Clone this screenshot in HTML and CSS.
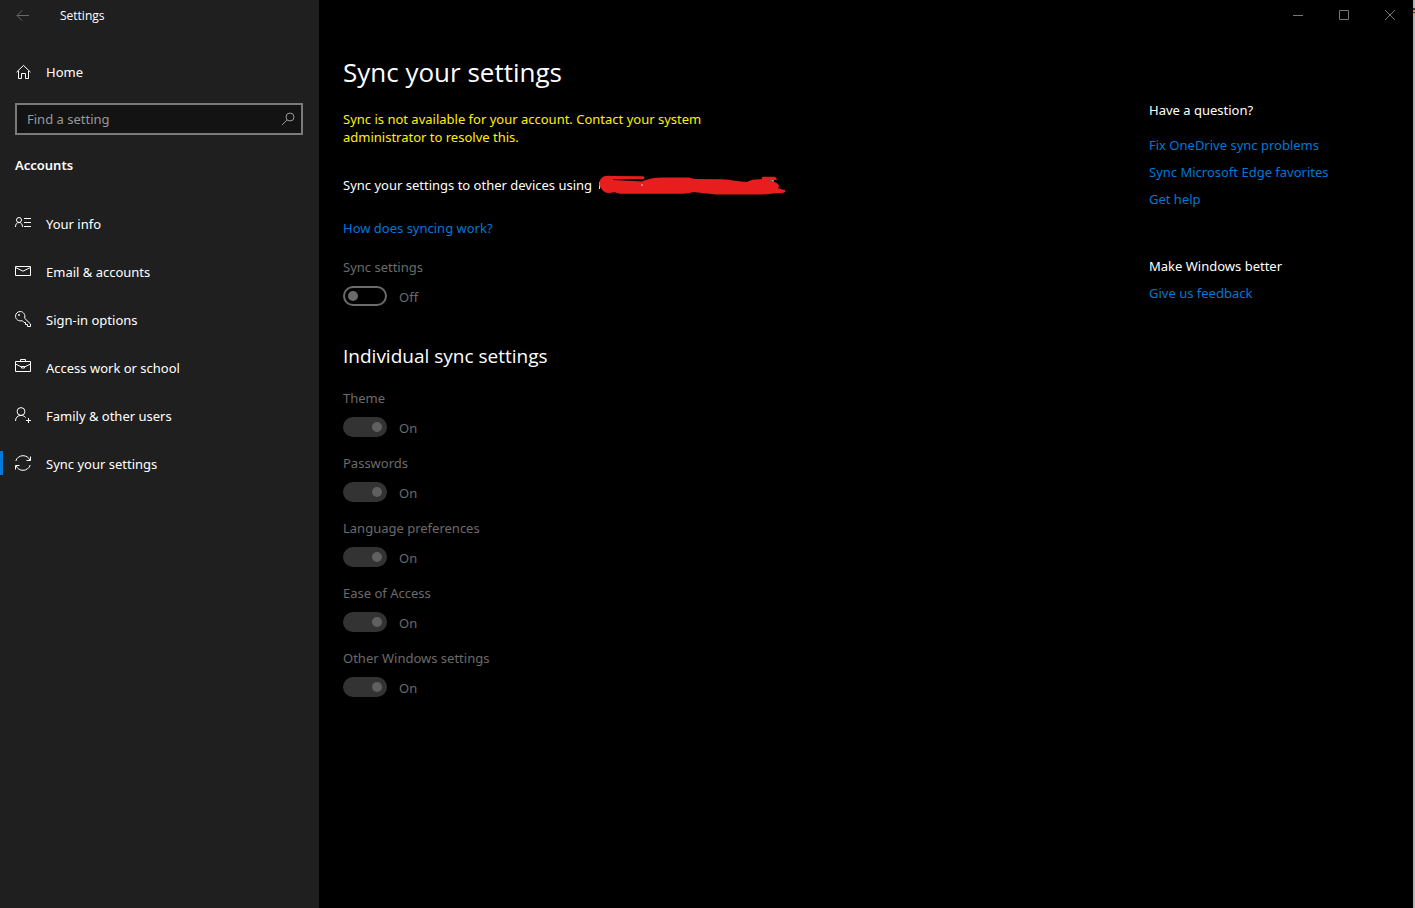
FILE: index.html
```html
<!DOCTYPE html>
<html lang="en">
<head>
<meta charset="utf-8">
<title>Settings</title>
<link rel="stylesheet" href="styles.css">
</head>
<body>
<div class="window">
  <aside class="sidebar">
    <header class="titlebar">
      <button class="back" type="button" aria-label="Back" disabled>
        <svg width="14" height="12" viewBox="0 0 14 12"><path d="M13 5.500H1M6 .5l-5 5 5 5"/></svg>
      </button>
      <span class="app-name">Settings</span>
    </header>
    <a class="nav-link home" href="#">
      <svg width="16" height="16" viewBox="0 0 16 16"><path d="M1.500 8.200L8.500 1.400l7 6.800M3.500 7v7.500h3v-5h4v5h3V7"/></svg>
      Home
    </a>
    <label class="search">
      <input type="text" placeholder="Find a setting" aria-label="Find a setting">
      <svg width="14" height="14" viewBox="0 0 14 14"><circle cx="9" cy="5" r="4"/><path d="M6.100 7.900L1 13"/></svg>
    </label>
    <h2 class="section">Accounts</h2>
    <nav class="nav">
      <a class="nav-link" href="#">
        <svg width="16" height="16" viewBox="0 0 16 16"><circle cx="4" cy="5" r="2.500"/><path d="M.5 12c0-2.800 1.300-4.500 3.500-4.500s3.500 1.700 3.500 4.500M9 3.500h7M9 7.500h7M9 11.500h7"/></svg>
        Your info
      </a>
      <a class="nav-link" href="#">
        <svg width="16" height="16" viewBox="0 0 16 16"><path d="M.5 3.500h15v9H.5zM.5 4.500L8 8.200l7.500-3.700"/></svg>
        Email &amp; accounts
      </a>
      <a class="nav-link" href="#">
        <svg width="16" height="16" viewBox="0 0 16 16"><circle cx="4" cy="4" r=".6"/><path d="M9.600 7.200L15.500 13v2.500h-3v-2h-2v-2H9L7.200 9.600C4 10.700.5 8.500.5 5.200.5 2.600 2.600.5 5.200.5c3.300 0 5.500 3.500 4.400 6.700z"/></svg>
        Sign-in options
      </a>
      <a class="nav-link" href="#">
        <svg width="16" height="16" viewBox="0 0 16 16"><path d="M.5 2.500h15v10H.5zM5.500 2.500v-2h5v2M.5 5l6 3M15.500 5l-6 3M6.500 7.500h3v1.500h-3z"/></svg>
        Access work or school
      </a>
      <a class="nav-link" href="#">
        <svg width="16" height="16" viewBox="0 0 16 16"><circle cx="6" cy="4.500" r="3.900"/><path d="M.5 14c0-3.400 2.200-5.600 5.500-5.600 2 0 3.600.8 4.600 2.200M13.500 11v5M11 13.500h5"/></svg>
        Family &amp; other users
      </a>
      <a class="nav-link active" href="#" aria-current="page">
        <svg width="16" height="16" viewBox="0 0 16 16"><path d="M.8 6C1.800 2.700 4.600.7 8 .7c3.200 0 5.700 1.700 7 4.600M15.500 1.500v4h-4M15.200 10c-1 3.300-3.800 5.300-7.200 5.300-3.200 0-5.700-1.700-7-4.600M.5 14.500v-4h4"/></svg>
        Sync your settings
      </a>
    </nav>
  </aside>

  <div class="content">
    <div class="caption">
      <button type="button" aria-label="Minimize"><svg width="10" height="10" viewBox="0 0 10 10"><path d="M0 5.500h10"/></svg></button>
      <button type="button" aria-label="Maximize"><svg width="10" height="10" viewBox="0 0 10 10"><path d="M.5.500h9v9h-9z"/></svg></button>
      <button type="button" aria-label="Close"><svg width="10" height="10" viewBox="0 0 10 10"><path d="M0 0l10 10M10 0L0 10"/></svg></button>
    </div>
    <div class="columns">
      <main class="page">
        <h1>Sync your settings</h1>
        <p class="warning">Sync is not available for your account. Contact your system administrator to resolve this.</p>
        <p class="account">Sync your settings to other devices using
          <svg class="scribble" width="188" height="20" viewBox="0 0 188 20" aria-hidden="true">
            <path class="trace" d="M1.500 7v7M171 5h4v8M177.500 13h2"/>
            <path d="M2 5C4 1 8 0 14 1l31 .3c2 .2 2 2.500 0 2.700L15 4.200l0 .8 29 1.500C52 3 58 2.500 66 2.500h24c3 0 4 1.500 8 1.500l26 .2c9 .3 17 2.600 25 2.800 6-3 9-2.500 15-3-1-3 2-2.200 5-2.300h6c4 0 3 2 4 3.300 0 0-6-.3-9 .5 5 .5 14 3.500 10 7.500l4 1.500c4-.5 5 3 0 3.500-10 .5-16 1.500-24 1.500l-42 0-23-2.500c-6 2-12 1.700-18 1.700H24c-5 0-6-1.500-8-1.700-6 2.200-11 .5-13-4C1 11 1 8 2 5z"/>
            <path class="trace" d="M43 10h2"/>
          </svg>
        </p>
        <a class="help" href="#">How does syncing work?</a>

        <section class="setting">
          <label for="sync">Sync settings</label>
          <div class="control"><input id="sync" type="checkbox" role="switch" disabled><span>Off</span></div>
        </section>

        <h2>Individual sync settings</h2>
        <section class="setting">
          <label for="theme">Theme</label>
          <div class="control"><input id="theme" type="checkbox" role="switch" checked disabled><span>On</span></div>
        </section>
        <section class="setting">
          <label for="passwords">Passwords</label>
          <div class="control"><input id="passwords" type="checkbox" role="switch" checked disabled><span>On</span></div>
        </section>
        <section class="setting">
          <label for="language">Language preferences</label>
          <div class="control"><input id="language" type="checkbox" role="switch" checked disabled><span>On</span></div>
        </section>
        <section class="setting">
          <label for="ease">Ease of Access</label>
          <div class="control"><input id="ease" type="checkbox" role="switch" checked disabled><span>On</span></div>
        </section>
        <section class="setting">
          <label for="other">Other Windows settings</label>
          <div class="control"><input id="other" type="checkbox" role="switch" checked disabled><span>On</span></div>
        </section>
      </main>
      <aside class="related">
        <h3>Have a question?</h3>
        <ul class="question">
          <li><a href="#">Fix OneDrive sync problems</a></li>
          <li><a href="#">Sync Microsoft Edge favorites</a></li>
          <li><a href="#">Get help</a></li>
        </ul>
        <h3>Make Windows better</h3>
        <ul>
          <li><a href="#">Give us feedback</a></li>
        </ul>
      </aside>
    </div>
  </div>
</div>
</body>
</html>
```
FILE: styles.css
```css
* { box-sizing: border-box; }

body {
  margin: 0;
  background: #000;
  color: #fff;
  font: 13px/18px "Segoe UI", "Noto Sans", "Open Sans", sans-serif;
}

h1, h2, h3, p, ul { margin: 0; padding: 0; font-weight: 400; }
ul { list-style: none; }
a { color: #0078d7; text-decoration: none; }
svg { flex: none; fill: none; stroke: currentColor; }

.window {
  display: flex;
  position: relative;
  min-height: 100vh;
  border-right: 2px solid #b4b4b4;
}

/* Sliver of the window behind, showing past the right edge */
.window::after {
  content: "";
  position: absolute;
  top: 8px;
  right: -2px;
  width: 2px;
  height: 7px;
  background: linear-gradient(#3c2a6a 0 2px, #e0a050 2px 4px, #4a3a50 4px 5px, #d8a868 5px);
}

.sidebar {
  flex: 0 0 319px;
  background: #1f1f1f;
}

.titlebar {
  display: flex;
  align-items: center;
  gap: 30px;
  height: 32px;
  padding-left: 16px;
}

.back {
  display: flex;
  padding: 0;
  border: 0;
  background: none;
  color: #6a6a6a;
}

.app-name { font-family: "Segoe UI", "Open Sans", sans-serif; font-size: 12px; }

.nav-link {
  display: flex;
  position: relative;
  align-items: center;
  gap: 15px;
  height: 48px;
  padding-left: 15px;
  color: #fff;
}

.nav svg { margin-bottom: 2px; }

.home { margin-top: 16px; }

.search {
  display: flex;
  align-items: center;
  height: 32px;
  margin: 7px 16px 0 15px;
  padding: 0 6px 0 10px;
  border: 2px solid #7a7a7a;
  background: #131313;
  color: #999;
}

.search input {
  flex: 1;
  min-width: 0;
  padding: 0;
  border: 0;
  outline: 0;
  background: none;
  color: #fff;
  font: inherit;
}

.search input::placeholder { color: #999; opacity: 1; }

.section {
  margin: 21px 15px 26px;
  font-size: 13px;
  line-height: 18px;
  font-weight: 600;
}

.active::before {
  content: "";
  position: absolute;
  left: 0;
  top: 11px;
  width: 3px;
  height: 24px;
  background: #0078d7;
}

.content { flex: 1; min-width: 0; }

.caption {
  display: flex;
  justify-content: flex-end;
  height: 30px;
}

.caption button {
  display: flex;
  align-items: center;
  justify-content: center;
  width: 46px;
  padding: 0;
  border: 0;
  background: none;
  color: #777;
}

.columns {
  display: flex;
  justify-content: space-between;
  padding-left: 24px;
}

.page { flex: 0 1 380px; padding-top: 24px; }

.page h1, .page h2 { font-family: "Segoe UI", "Open Sans", sans-serif; }

.page h1 {
  margin-bottom: 20px;
  font-size: 26px;
  line-height: 36px;
}

.warning { margin-bottom: 30px; color: #fff100; }

.account {
  display: flex;
  align-items: center;
  gap: 6px;
  width: max-content;
  margin-bottom: 25px;
}

.scribble { margin: -1px 0; fill: #e81e1e; stroke: none; }
.scribble .trace { fill: none; stroke: #ddd; }

.help { display: block; margin-bottom: 21px; }

.setting { margin-bottom: 17px; color: #6b6b6b; }
.setting label { display: block; margin-bottom: 10px; }

.control {
  display: flex;
  align-items: center;
  gap: 12px;
  height: 20px;
}

.control span { padding-top: 2px; }

.control input {
  appearance: none;
  display: flex;
  align-items: center;
  width: 44px;
  height: 20px;
  margin: 0;
  padding: 0 3px;
  border: 2px solid #6b6b6b;
  border-radius: 10px;
}

.control input::before {
  content: "";
  width: 10px;
  height: 10px;
  border-radius: 50%;
  background: #6b6b6b;
}

.control input:checked {
  justify-content: flex-end;
  border-color: #333;
  background: #333;
}

.control input:checked::before { background: #606060; }

.page h2 {
  margin: 36px 0 19px;
  font-size: 19px;
  line-height: 28px;
}

.related { flex: 0 0 264px; padding-top: 71px; }
.related h3 { margin-bottom: 9px; font-size: 13px; }
.related li { margin-bottom: 9px; }
.related .question { margin: 17px 0 49px; }
```
